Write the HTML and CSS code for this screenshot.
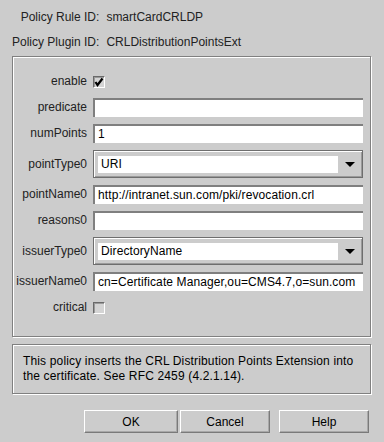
FILE: index.html
```html
<!DOCTYPE html>
<html>
  <head>
    <title>Policy Rule</title>
    <link rel="stylesheet" href="styles.css">
  </head>
  <body>
    <div class="ids">
      <span class="key">Policy Rule ID:</span><span>smartCardCRLDP</span>
      <span class="key">Policy Plugin ID:</span><span>CRLDistributionPointsExt</span>
    </div>

    <div class="panel">
      <label class="lbl">enable</label>
      <div class="cell"><span class="check on"><svg width="10" height="10" viewBox="0 0 10 10"><path d="M1.5 5 L3.5 8 L8.5 1.5" fill="none" stroke="#000" stroke-width="2.2"/></svg></span></div>

      <label class="lbl">predicate</label>
      <div class="field"></div>

      <label class="lbl">numPoints</label>
      <div class="field">1</div>

      <label class="lbl">pointType0</label>
      <div class="combo"><span class="combo-text">URI</span><span class="combo-arrow"><svg width="10" height="5" viewBox="0 0 10 5"><path d="M0 0 H10 L5 5 Z" fill="#000"/></svg></span></div>

      <label class="lbl">pointName0</label>
      <div class="field">http://intranet.sun.com/pki/revocation.crl</div>

      <label class="lbl">reasons0</label>
      <div class="field"></div>

      <label class="lbl">issuerType0</label>
      <div class="combo"><span class="combo-text">DirectoryName</span><span class="combo-arrow"><svg width="10" height="5" viewBox="0 0 10 5"><path d="M0 0 H10 L5 5 Z" fill="#000"/></svg></span></div>

      <label class="lbl">issuerName0</label>
      <div class="field">cn=Certificate Manager,ou=CMS4.7,o=sun.com</div>

      <label class="lbl">critical</label>
      <div class="cell"><span class="check"></span></div>
    </div>

    <div class="desc">
      This policy inserts the CRL Distribution Points Extension into the certificate. See RFC 2459 (4.2.1.14).
    </div>

    <div class="buttons">
      <button class="btn ok">OK</button>
      <button class="btn cancel">Cancel</button>
      <button class="btn help">Help</button>
    </div>
  </body>
</html>
```

FILE: styles.css
```css
body {
  margin: 0;
  background-color: #cccccc;
  font-family: "Liberation Sans", Arial, sans-serif;
  font-size: 12px;
  color: #222222;
  width: 384px;
  height: 442px;
}

.ids {
  display: grid;
  grid-template-columns: auto 1fr;
  grid-auto-rows: 15px;
  column-gap: 7px;
  row-gap: 10px;
  line-height: 15px;
  padding: 10px 0 0 12px;
}

.ids .key {
  text-align: right;
}

.panel {
  margin: 6px 13px 0 12px;
  border: 1px solid #808080;
  box-shadow: 1px 1px 0 #ffffff, inset 1px 1px 0 #ffffff;
  display: grid;
  grid-template-columns: 74px 1fr;
  grid-template-rows: 19px 19px 19px 28px 19px 19px 28px 19px 19px;
  column-gap: 6px;
  row-gap: 7px;
  padding: 15px 7px 19px 0;
}

.lbl {
  text-align: right;
  align-self: center;
  line-height: 15px;
  white-space: nowrap;
}

.cell {
  display: flex;
  align-items: center;
}

.check {
  width: 10px;
  height: 10px;
  border: 1px solid;
  border-color: #6a6a6a #ffffff #ffffff #6a6a6a;
  box-shadow: 1px 1px 0 #9a9a9a inset;
  background: #d4d4d4;
  display: flex;
  align-items: center;
  justify-content: center;
}

.check svg {
  display: block;
}

.field {
  background: #ffffff;
  border-style: solid;
  border-color: #7f7f7f;
  border-width: 2px 0 0 2px;
  padding: 0 3px;
  line-height: 17px;
  color: #000;
  letter-spacing: 0.1px;
  white-space: nowrap;
  overflow: hidden;
}

.combo {
  display: flex;
  border: 1px solid #6e6e6e;
  box-shadow: inset 1px 1px 0 #ffffff, inset -1px -1px 0 #9a9a9a;
  padding: 5px 1px 4px 4px;
  background: #cccccc;
}

.combo-text {
  flex: 1;
  background: #ffffff;
  line-height: 17px;
  padding-left: 3px;
  color: #000;
  letter-spacing: 0.1px;
}

.combo-arrow {
  width: 23px;
  display: flex;
  align-items: center;
  justify-content: center;
}

.combo-arrow svg {
  display: block;
}

.desc {
  margin: 7px 13px 0 12px;
  border: 1px solid #808080;
  box-shadow: 1px 1px 0 #ffffff, inset 1px 1px 0 #ffffff;
  height: 48px;
  padding: 0 10px;
  line-height: 15px;
  letter-spacing: 0.15px;
  display: flex;
  align-items: center;
  color: #000;
}

.buttons {
  display: flex;
  margin-top: 16px;
  padding-left: 84px;
}

.btn {
  height: 23px;
  font-family: "Liberation Sans", Arial, sans-serif;
  font-size: 12px;
  color: #000;
  background: #cccccc;
  border: 1px solid;
  border-color: #ffffff #7a7a7a #7a7a7a #ffffff;
  box-shadow: inset -1px -1px 0 #a8a8a8;
  padding: 0;
}

.ok {
  width: 94px;
}

.cancel {
  width: 90px;
  margin-left: 2px;
}

.help {
  width: 90px;
  margin-left: 9px;
}
```
